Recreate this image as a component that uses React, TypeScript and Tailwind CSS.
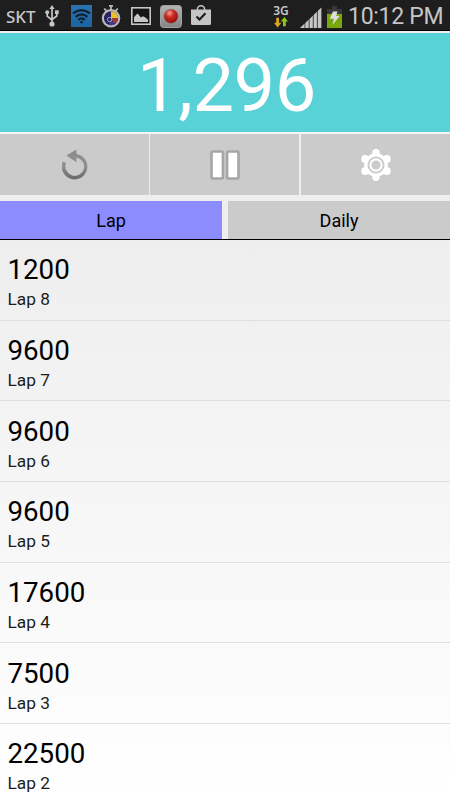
import React from 'react';

interface Lap {
    id: number;
    steps: string;
}

const LAPS: Lap[] = [
    { id: 8, steps: '1200' },
    { id: 7, steps: '9600' },
    { id: 6, steps: '9600' },
    { id: 5, steps: '9600' },
    { id: 4, steps: '17600' },
    { id: 3, steps: '7500' },
    { id: 2, steps: '22500' },
];

const UsbIcon = () => (
    <svg width="14" height="22" viewBox="0 0 14 22" fill="none" stroke="#c6c6c6" strokeWidth="1.7">
        <path d="M7 3v16M2.2 7v4.2L7 15M11.8 7v4L7 14.5" />
        <path d="M7 0l2.6 4H4.4z" fill="#c6c6c6" stroke="none" />
        <circle cx="7" cy="19" r="2.6" fill="#c6c6c6" stroke="none" />
        <circle cx="2.2" cy="7.2" r="2" fill="#c6c6c6" stroke="none" />
        <path d="M10 5.3h3.7v3.7H10z" fill="#c6c6c6" stroke="none" />
    </svg>
);

const WifiIcon = () => (
    <svg width="21" height="22" viewBox="0 0 21 22" fill="none" stroke="#10202c" strokeWidth="2.2">
        <defs>
            <linearGradient id="wifiBg" x1="0" y1="0" x2="0" y2="1">
                <stop offset="0" stopColor="#2a72b0" />
                <stop offset="1" stopColor="#1b64a2" />
            </linearGradient>
        </defs>
        <rect width="21" height="22" fill="url(#wifiBg)" stroke="none" />
        <path d="M2 8.4Q10.5 1.800 19 8.4M4.6 11.8Q10.5 7 16.4 11.8M7.200 14.8Q10.5 12 13.800 14.8" />
        <path d="M8.6 16.800Q10.5 15.400 12.4 16.800L10.5 18.800z" fill="#10202c" stroke="none" />
    </svg>
);

const StopwatchIcon = () => (
    <svg width="20" height="23" viewBox="0 0 20 23">
        <path d="M8 0.8h4M10 0v5M3.2 3.5l2.4 2.7M16.8 3.5l-2.4 2.7" stroke="#b5b5b5" strokeWidth="1.8" />
        <circle cx="10" cy="13.3" r="9.2" fill="#b9b9bd" />
        <circle cx="10" cy="13.3" r="7" fill="#29225f" />
        <path d="M10 13.3V6.3a7 7 0 0 1 7 7z" fill="#e8c02c" />
        <path d="M10 13.3h7a7 7 0 0 1-3 5.7z" fill="#a8392c" />
        <path d="M10 13.3l4 5.7a7 7 0 0 1-6 1z" fill="#3a3f8c" />
        <circle cx="8.6" cy="14.500" r="2.2" fill="none" stroke="#a9a0d0" strokeWidth="1" />
    </svg>
);

const PictureIcon = () => (
    <svg width="20" height="18" viewBox="0 0 20 18">
        <rect x="0.8" y="0.8" width="18.4" height="16.4" fill="#151515" stroke="#c6c6c6" strokeWidth="1.6" />
        <path d="M3 15v-4.7l2.2-2.5 1.3-1.2 3.5 3.8 1.8-1.2 2.2 1 3 2.6v2.2z" fill="#c6c6c6" />
    </svg>
);

const RecordIcon = () => (
    <svg width="22" height="23" viewBox="0 0 22 23">
        <defs>
            <radialGradient id="recDot" cx="0.4" cy="0.28" r="0.75">
                <stop offset="0" stopColor="#f0a49c" />
                <stop offset="0.4" stopColor="#cf2a20" />
                <stop offset="1" stopColor="#8e0d08" />
            </radialGradient>
            <linearGradient id="recBg" x1="0" y1="0" x2="0" y2="1">
                <stop offset="0" stopColor="#b4b4b4" />
                <stop offset="1" stopColor="#858585" />
            </linearGradient>
        </defs>
        <rect x="0.5" y="0.5" width="21" height="22" rx="3" fill="url(#recBg)" stroke="#a2a2a2" />
        <circle cx="11" cy="11.2" r="7" fill="url(#recDot)" stroke="#7f6a68" strokeWidth="0.6" />
    </svg>
);

const BagIcon = () => (
    <svg width="20" height="20" viewBox="0 0 20 20" fill="none">
        <path d="M6.4 6V4.2a3.6 3.4 0 0 1 7.2 0V6" stroke="#c6c6c6" strokeWidth="1.5" />
        <path d="M0 4.5h20V18.5q0 1.5-1.5 1.5H1.5Q0 20 0 18.5z" fill="#c6c6c6" />
        <path d="M5.5 11.5l3 3 6-6.2" stroke="#1e1e1e" strokeWidth="2.2" />
    </svg>
);

const DataArrowsIcon = () => (
    <svg width="14" height="11" viewBox="0 0 14 11">
        <path d="M2.2 0.8h2.8v5h2.3L3.6 10.6 0 5.8h2.2z" fill="#d9a520" />
        <path d="M10.4 0L14 4.4h-2.2v4.800H9V4.4H6.8z" fill="#8bc814" />
    </svg>
);

const SignalIcon = () => (
    <svg width="22" height="21" viewBox="0 0 22 21" fill="#c6c6c6">
        <path d="M0 21l4.6-4.4V21zM5.3 16l3.4-3.4V21H5.3zM9.5 12l3.3-3.2V21H9.5zM13.6 8l3.3-3.2V21h-3.3zM17.7 4l3.7-3.6V21h-3.7z" />
    </svg>
);

const BatteryIcon = () => (
    <svg width="15" height="22" viewBox="0 0 15 22">
        <path d="M5 0h5v3h5v19H0V3h5z" fill="#383838" />
        <path d="M0 8h15v14H0z" fill="#78a80b" />
        <path d="M6 5.5h4.5L9.2 10h3.4L5.5 19l1.4-6.2H2.8z" fill="#dedede" />
    </svg>
);

const ResetIcon = () => (
    <svg width="26" height="31" viewBox="0 0 26 31">
        <defs>
            <linearGradient id="resetInk" x1="0" y1="0" x2="0" y2="1">
                <stop offset="0" stopColor="#8c8c8c" />
                <stop offset="0.55" stopColor="#919191" />
                <stop offset="1" stopColor="#686868" />
            </linearGradient>
        </defs>
        <path d="M14.4 4.9A12.8 12.8 0 1 1 .8 12.5L4.2 13.9A9.3 9.3 0 1 0 14.4 8.4V13.2L4.4 6.4 14.4.4z" fill="url(#resetInk)" />
    </svg>
);

const PauseIcon = () => (
    <svg width="30" height="30" viewBox="0 0 30 30" fill="#fff" stroke="#a6a6a6" strokeWidth="2.6">
        <rect x="1.5" y="1.5" width="11.4" height="27" rx="1.2" />
        <rect x="17.1" y="1.5" width="11.4" height="27" rx="1.2" />
    </svg>
);

const GearIcon = () => (
    <svg width="30" height="32" viewBox="0 0 30 32" fill="#fff">
        <circle cx="15" cy="16" r="11.8" />
        <circle cx="15" cy="3.8" r="3.7" />
        <circle cx="15" cy="28.2" r="3.7" />
        <circle cx="4.2" cy="10" r="3.9" />
        <circle cx="25.8" cy="10" r="3.9" />
        <circle cx="4.2" cy="22" r="3.9" />
        <circle cx="25.8" cy="22" r="3.9" />
        <circle cx="15" cy="16" r="7.6" fill="none" stroke="#cbcbcb" strokeWidth="1.9" />
        <circle cx="15" cy="16" r="4.6" fill="#cbcbcb" />
    </svg>
);

const StatusBar = () => (
    <div className="flex h-[31px] shrink-0 items-start border-b border-black bg-[#1e1e1e] text-[#c6c6c6]">
        <span className="ml-[6px] mt-[5px] w-[39px] font-['Noto_Sans'] text-[17px] font-medium leading-[23px]">SKT</span>
        <div className="mt-[5px]"><UsbIcon /></div>
        <div className="ml-[12px] mt-[5px]"><WifiIcon /></div>
        <div className="ml-[9px] mt-[5px]"><StopwatchIcon /></div>
        <div className="ml-[10px] mt-[7px]"><PictureIcon /></div>
        <div className="ml-[9px] mt-[5px]"><RecordIcon /></div>
        <div className="ml-[9px] mt-[5px]"><BagIcon /></div>
        <div className="ml-[61px] mt-[5px] flex w-[18px] flex-col items-center">
            <span className="font-['Noto_Sans'] text-[12px] font-semibold leading-[12px]">3G</span>
            <DataArrowsIcon />
        </div>
        <div className="ml-[10px] mt-[7px]"><SignalIcon /></div>
        <div className="ml-[5px] mt-[6px]"><BatteryIcon /></div>
        <span className="ml-[6px] mt-[3px] whitespace-nowrap text-[23px] leading-[28px] tracking-[-0.3px]">10:12 PM</span>
    </div>
);

export default function App() {
    return (
        <div className="flex h-[800px] w-[450px] flex-col overflow-hidden bg-[#eeeeee] font-[Roboto,sans-serif] text-black">
            <StatusBar />

            {/* Step counter */}
            <div className="mt-[2px] flex h-[99px] shrink-0 items-center justify-center bg-[#58d2d7]">
                <span className="pl-[3px] pt-[6px] text-[74px] leading-none tracking-[-0.4px] text-white">1,296</span>
            </div>

            {/* Controls */}
            <div className="flex h-[63px] shrink-0 border-t-2 border-[#f4f4f4]">
                <button className="flex w-[149px] items-center justify-center bg-[#cbcbcb]"><ResetIcon /></button>
                <button className="ml-px flex w-[149px] items-center justify-center bg-[#cbcbcb]"><PauseIcon /></button>
                <button className="ml-[2px] flex w-[149px] items-center justify-center bg-[#cbcbcb]"><GearIcon /></button>
            </div>

            {/* Tabs */}
            <div className="mt-[6px] flex h-[39px] shrink-0 gap-[6px] border-b border-black text-[18px]">
                <button className="flex-1 bg-[#8c8cff]">Lap</button>
                <button className="flex-1 bg-[#cbcbcb]">Daily</button>
            </div>

            <div className="flex-1 overflow-hidden bg-linear-to-b from-[#eeeeee] to-white">
                {LAPS.map((lap) => (
                    <div key={lap.id} className="h-[80.65px] border-b border-[#dfdfdf] pl-[7.5px] pt-[14.4px]">
                        <div className="text-[27.7px] leading-[32px]">{lap.steps}</div>
                        <div className="mt-[3px] text-[17.3px] leading-[20px] text-[#1c1c1c]">Lap {lap.id}</div>
                    </div>
                ))}
            </div>
        </div>
    );
}
